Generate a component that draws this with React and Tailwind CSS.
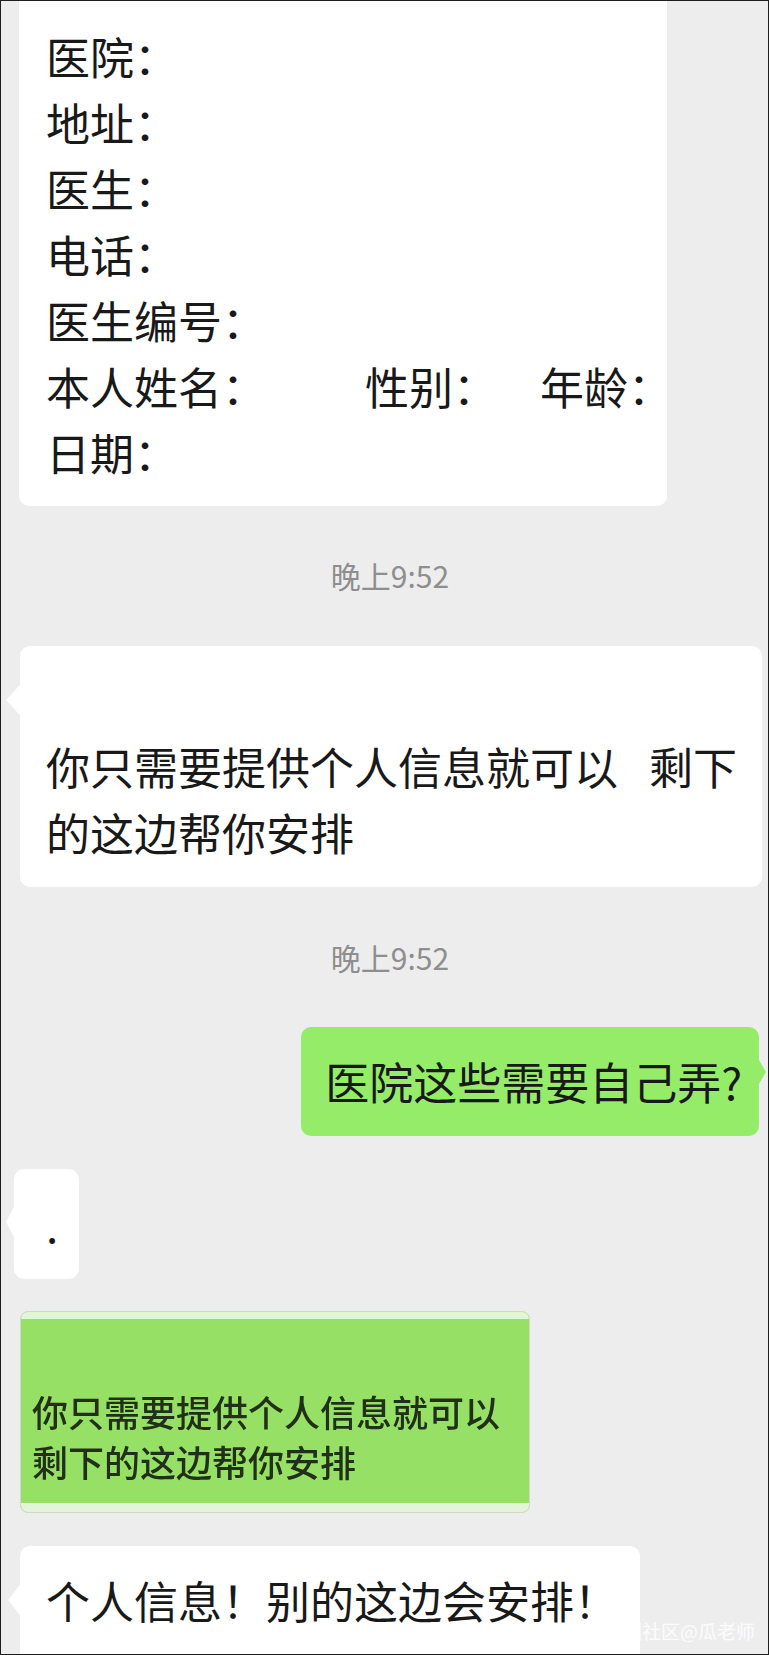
import React from "react";

const LeftTail = ({ w = 15, top = 39 }) => (
  <svg
    className="absolute"
    style={{ left: -w, top }}
    width={w}
    height={30}
    viewBox={`0 0 ${w} 30`}
  >
    <polygon points={`${w},0 1,15 ${w},30`} fill="#ffffff" />
  </svg>
);

const RightTail = ({ top = 33 }) => (
  <svg className="absolute right-[-8px]" style={{ top }} width={8} height={24} viewBox="0 0 8 24">
    <polygon points="0,0 7,12 0,24" fill="#95ec69" />
  </svg>
);

const Time = ({ pt = "pt-[51px]", pb = "pb-[51px]" }) => (
  <div className={`flex justify-center pr-[8px] ${pt} ${pb} text-[30px] leading-[40px] text-[#8e8e8e]`}>
    晚上9:52
  </div>
);

const App = () => {
  return (
    <div className="relative w-[769px] h-[1655px] overflow-hidden border border-[#1e1e1e] bg-[#ededed] text-[#191919] font-['Noto_Sans_CJK_SC','Noto_Sans',sans-serif]">
      <div className="flex flex-col items-start pl-[19px]">
        {/* form message, cut at the top */}
        <div className="ml-[-1px] w-[648px] rounded-b-[10px] bg-white pt-[22px] pb-[21px] pl-[27px] text-[44px] leading-[66px] whitespace-nowrap">
          <div>医院：</div>
          <div>地址：</div>
          <div>医生：</div>
          <div>电话：</div>
          <div>医生编号：</div>
          <div className="flex">
            <span className="w-[319px] shrink-0">本人姓名：</span>
            <span className="w-[175px] shrink-0">性别：</span>
            <span className="shrink-0">年龄：</span>
          </div>
          <div>日期：</div>
        </div>

        <div className="self-stretch">
          <Time pt="pt-[49px]" />
        </div>

        <div className="relative w-[742px] rounded-[10px] bg-white pt-[21px] pb-[22px] pl-[26px] text-[44px] leading-[66px]">
          <LeftTail w={15} top={39} />
          <div className="h-[66px]" />
          <div className="whitespace-nowrap">
            你只需要提供个人信息就可以<span className="inline-block w-[31px]" />剩下
          </div>
          <div>的这边帮你安排</div>
        </div>

        <div className="self-stretch">
          <Time pt="pt-[50px]" pb="pb-[50px]" />
        </div>

        <div className="self-end mr-[9px] relative rounded-[10px] bg-[#95ec69] pt-[21px] pb-[22px] pl-[24px] pr-[17px] text-[44px] leading-[66px]">
          <RightTail top={33} />
          医院这些需要自己弄?
        </div>

        <div className="relative mt-[33px] ml-[-6px] w-[65px] rounded-[10px] bg-white pt-[22px] pb-[22px] pl-[32px] text-[44px] leading-[66px]">
          <LeftTail w={9} top={38} />
          .
        </div>

        <div className="mt-[32px] flex h-[202px] w-[510px] flex-col overflow-hidden rounded-[8px] border border-[#cfd9c6] bg-[#97e066]">
          <div className="h-[7px] bg-[#e2f6d6]" />
          <div className="flex-1 pt-[67px] pl-[11px] text-[36px] leading-[50px] font-medium text-[#22301a] blur-[0.5px]">
            <div>你只需要提供个人信息就可以</div>
            <div>剩下的这边帮你安排</div>
          </div>
          <div className="h-[9px] bg-[#e4f4dc]" />
        </div>

        <div className="relative mt-[33px] w-[620px] rounded-[10px] bg-white pt-[21px] pb-[30px] pl-[26px] text-[44px] leading-[66px]">
          <LeftTail w={13} top={39} />
          个人信息！别的这边会安排！
        </div>
      </div>

      <div className="absolute right-[13px] bottom-[10px] text-[19px] leading-[26px] text-white/80">
        圈社区@瓜老师
      </div>
    </div>
  );
};

export default App;
